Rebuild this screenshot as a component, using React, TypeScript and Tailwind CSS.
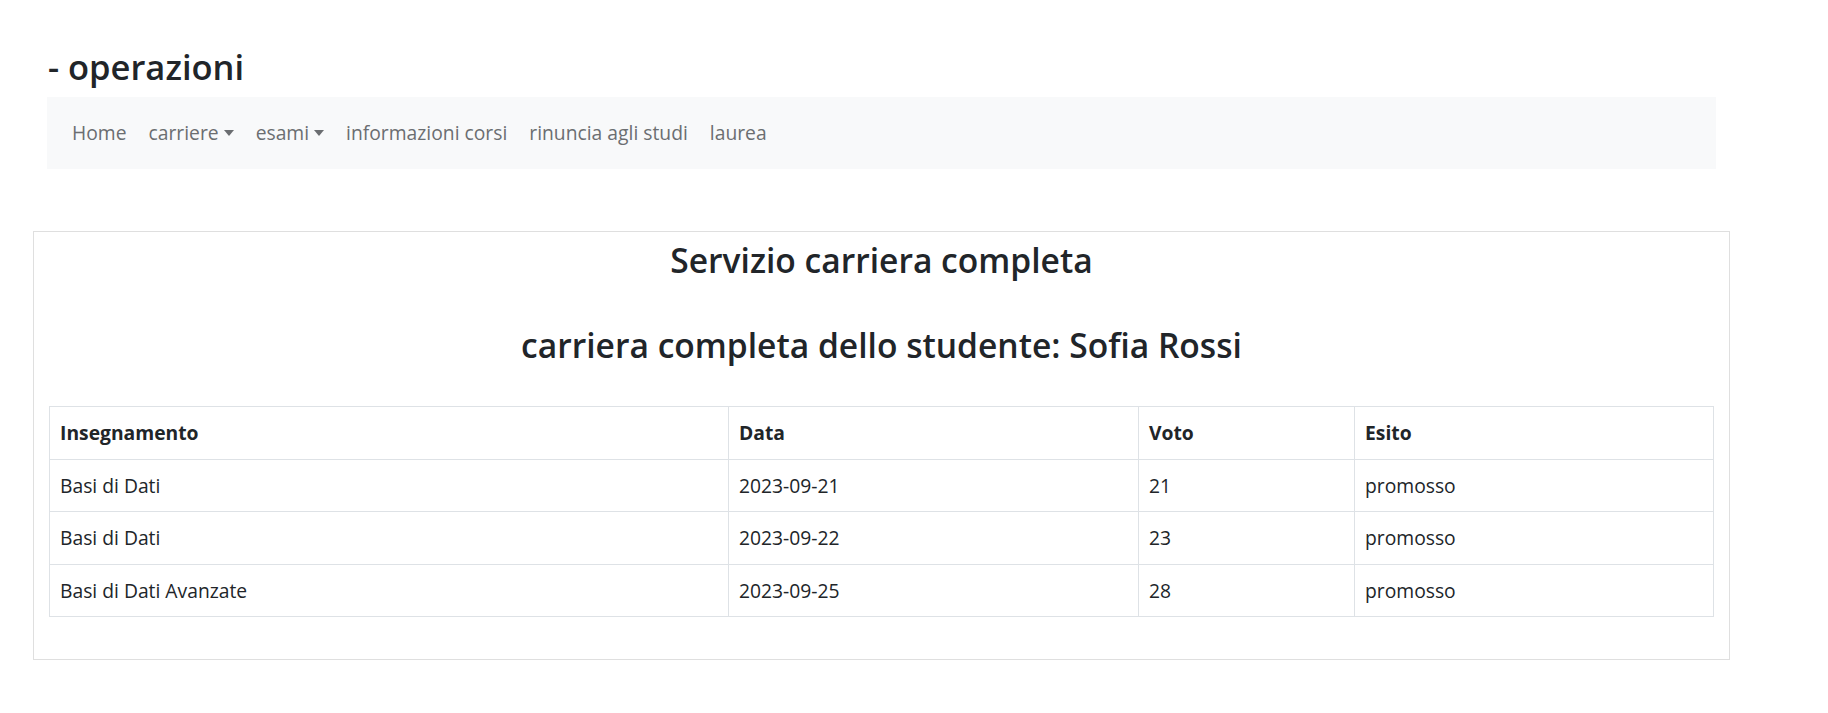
import React from 'react';

const rows = [
    { corso: 'Basi di Dati', data: '2023-09-21', voto: '21', esito: 'promosso' },
    { corso: 'Basi di Dati', data: '2023-09-22', voto: '23', esito: 'promosso' },
    { corso: 'Basi di Dati Avanzate', data: '2023-09-25', voto: '28', esito: 'promosso' },
];

function Caret() {
    return (
        <span className="ml-[5px] inline-block h-0 w-0 border-x-[5.5px] border-t-[6px] border-x-transparent border-t-[#6b6e71] align-[4px]" />
    );
}

export default function App() {
    const links = [
        { label: 'Home' },
        { label: 'carriere', dropdown: true },
        { label: 'esami', dropdown: true },
        { label: 'informazioni corsi' },
        { label: 'rinuncia agli studi' },
        { label: 'laurea' },
    ];

    return (
        <div className="min-h-[713px] bg-white font-['Open_Sans',sans-serif] text-[#212529]">
            {/* Header */}
            <div className="w-[1716px] pl-[47px] pt-[44px]">
                <h2 className="mb-[8px] pl-[1px] text-[34.5px] font-semibold leading-[45px]">- operazioni</h2>
                <nav className="flex h-[72px] items-center bg-[#f8f9fa] pl-[14px]">
                    {links.map((link) => (
                        <a key={link.label} className="px-[11px] text-[19.3px] leading-[28px] text-[#6b6e71]">
                            {link.label}
                            {link.dropdown && <Caret />}
                        </a>
                    ))}
                </nav>
            </div>

            {/* Card */}
            <div className="ml-[33px] mt-[62px] w-[1697px] border border-[#dfdfdf] px-[15px] pb-[42px] pt-[6px]">
                <h2 className="text-center text-[33.6px] font-semibold leading-[45px]">Servizio carriera completa</h2>
                <h2 className="mt-[40px] text-center text-[33.6px] font-semibold leading-[45px]">
                    carriera completa dello studente: Sofia Rossi
                </h2>
                <table className="mt-[38px] w-full border-collapse text-[19.3px] leading-[27.6px]">
                    <thead>
                        <tr>
                            <th className="w-[679px] border border-[#dee2e6] px-[10px] py-[12px] text-left font-bold">Insegnamento</th>
                            <th className="w-[410px] border border-[#dee2e6] px-[10px] py-[12px] text-left font-bold">Data</th>
                            <th className="w-[216px] border border-[#dee2e6] px-[10px] py-[12px] text-left font-bold">Voto</th>
                            <th className="border border-[#dee2e6] px-[10px] py-[12px] text-left font-bold">Esito</th>
                        </tr>
                    </thead>
                    <tbody>
                        {rows.map((r, i) => (
                            <tr key={i}>
                                <td className="border border-[#dee2e6] px-[10px] py-[12px]">{r.corso}</td>
                                <td className="border border-[#dee2e6] px-[10px] py-[12px]">{r.data}</td>
                                <td className="border border-[#dee2e6] px-[10px] py-[12px]">{r.voto}</td>
                                <td className="border border-[#dee2e6] px-[10px] py-[12px]">{r.esito}</td>
                            </tr>
                        ))}
                    </tbody>
                </table>
            </div>
        </div>
    );
}
